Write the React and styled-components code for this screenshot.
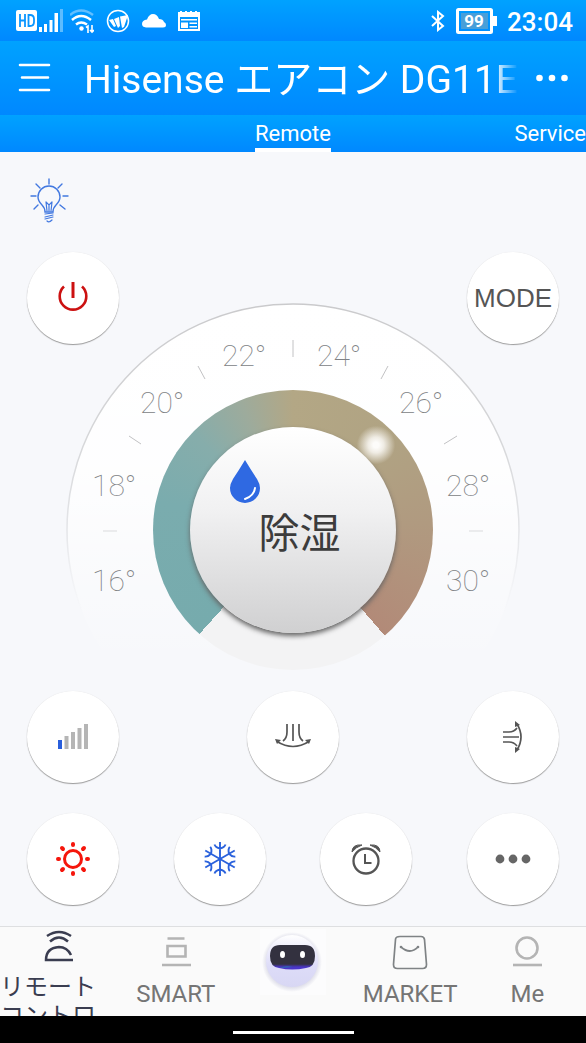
import React from "react";
import styled, { createGlobalStyle } from "styled-components";

const GlobalStyle = createGlobalStyle`
  * { box-sizing: border-box; }
  body { margin: 0; background: #f7f8fb; font-family: Roboto, "Noto Sans CJK JP", sans-serif; }
  button { font: inherit; border: 0; padding: 0; background: none; color: inherit; cursor: pointer; }
  a { color: inherit; text-decoration: none; }
  svg { display: block; flex: none; }
`;

const blue = "linear-gradient(#00a2ff, #0088ff)";

const Page = styled.div`
  min-height: 100vh;
  display: flex;
  flex-direction: column;
  overflow: hidden;
`;

const StatusBar = styled.div`
  height: 41px;
  display: flex;
  align-items: center;
  justify-content: space-between;
  padding: 0 13px 0 16px;
  background: ${blue};
  color: #fff;
`;

const StatusGroup = styled.div`
  display: flex;
  align-items: center;
  gap: ${(p) => p.$gap}px;
`;

const Clock = styled.time`
  font-size: 26px;
  line-height: 32px;
  font-weight: 500;
  padding-top: 2px;
`;

const Header = styled.header`
  height: 74px;
  display: flex;
  align-items: center;
  padding: 0 16px 0 18px;
  background: ${blue};
  color: #fff;
`;

const Title = styled.h1`
  flex: 1;
  min-width: 0;
  margin: 0 16px 0 32px;
  font-size: 39px;
  font-weight: 400;
  line-height: 48px;
  padding-top: 4px;
  white-space: nowrap;
  overflow: hidden;
  mask-image: linear-gradient(to right, #000 calc(100% - 24px), transparent);
`;

const Tabs = styled.nav`
  height: 37px;
  display: grid;
  grid-template-columns: 1fr auto 1fr;
  background: ${blue};
  color: #fff;
`;

const Tab = styled.a`
  grid-column: ${(p) => p.$column};
  justify-self: end;
  font-size: 22px;
  line-height: 33px;
  padding-top: 2px;
  border-bottom: 4px solid ${(p) => (p.$active ? "#fff" : "transparent")};
  height: 37px;
`;

const Main = styled.main`
  flex: 1;
  display: flex;
  flex-direction: column;
  padding: 24px 27px 20px;
`;

const LightButton = styled.button`
  align-self: flex-start;
  margin: 0 0 28px 3px;
`;

const ButtonRow = styled.div`
  display: flex;
  justify-content: space-between;
  margin-bottom: ${(p) => p.$below || 0}px;
`;

const RoundButton = styled.button`
  width: 92px;
  height: 92px;
  flex: none;
  display: flex;
  align-items: center;
  justify-content: center;
  border-radius: 50%;
  background: #fff;
  box-shadow: 0 1px 1px #9a9a9a, 0 0 1px #e2e2e4;
  color: #555;
  font-family: "Liberation Sans", sans-serif;
  font-size: 26px;
`;

const Dial = styled.section`
  align-self: center;
  display: grid;
  justify-items: center;
  margin: -41px 0 21px;
  > * { grid-area: 1 / 1; }
`;

const Ring = styled.div`
  width: 280px;
  height: 280px;
  margin-top: 87px;
  border-radius: 50%;
  background: conic-gradient(
    from 222deg,
    #76abad 0deg, #7aacae 60deg, #86adab 92deg, #9dab9c 116deg,
    #b3a785 138deg, #b0a383 185deg, #b09a80 225deg, #b28a78 277deg,
    #f3f3f4 277deg, #f3f3f4 360deg
  );
`;

const Knob = styled.button`
  width: 206px;
  height: 206px;
  margin-top: 124px;
  border-radius: 50%;
  display: flex;
  flex-direction: column;
  align-items: center;
  padding: 33px 0 0 13px;
  background: linear-gradient(#ffffff, #f1f1f2 40%, #d0d0d1);
  box-shadow: 0 3px 5px #666;
  color: #3c3c3c;
  font-size: 41px;
  line-height: 60px;
  position: relative;
`;

const Drop = styled.svg`
  align-self: flex-start;
  margin: 0 0 0 26px;
`;

const Glow = styled.div`
  width: 40px;
  height: 40px;
  margin: 122px 0 0 165px;
  border-radius: 50%;
  background: radial-gradient(#fdfcfa 10%, rgba(250, 248, 244, 0.85) 28%, rgba(255, 255, 255, 0) 68%);
  position: relative;
  pointer-events: none;
`;

const BottomNav = styled.nav`
  height: 90px;
  display: grid;
  grid-template-columns: repeat(5, 1fr);
  overflow: hidden;
  background: #fafafa;
  border-top: 1px solid #dedfe1;
`;

const NavItem = styled.a`
  display: flex;
  flex-direction: column;
  align-items: center;
  gap: ${(p) => (p.$active ? 2 : 9)}px;
  color: ${(p) => (p.$active ? "#3a3d50" : "#757575")};
  font-size: 24px;
  line-height: 29px;
  white-space: nowrap;
`;

const NavLabel = styled.span`
  align-self: ${(p) => (p.$start ? "flex-start" : "center")};
`;

const SystemBar = styled.div`
  height: 27px;
  display: flex;
  justify-content: center;
  align-items: center;
  background: #000;
  padding-top: 5px;
`;

const HomeHandle = styled.div`
  width: 121px;
  height: 3px;
  background: #fff;
`;

const labels = [
  ["16°", 26, 288], ["18°", 26, 193], ["20°", 74, 110], ["22°", 156, 63],
  ["24°", 251, 63], ["26°", 333, 110], ["28°", 380, 193], ["30°", 380, 288],
];

function DialFace() {
  return (
    <svg width="454" height="367" viewBox="0 0 454 367">
      <defs>
        <linearGradient id="face" x1="0" y1="0" x2="0" y2="454" gradientUnits="userSpaceOnUse">
          <stop offset="0" stopColor="#fff" />
          <stop offset="0.35" stopColor="#fff" stopOpacity="0.9" />
          <stop offset="0.6" stopColor="#fff" stopOpacity="0.35" />
          <stop offset="0.8" stopColor="#fff" stopOpacity="0" />
        </linearGradient>
        <linearGradient id="rim" x1="0" y1="0" x2="0" y2="454" gradientUnits="userSpaceOnUse">
          <stop offset="0" stopColor="#cacacc" />
          <stop offset="0.3" stopColor="#d6d7d9" />
          <stop offset="0.5" stopColor="#e4e5e8" />
          <stop offset="0.68" stopColor="#e8e9ec" stopOpacity="0" />
        </linearGradient>
      </defs>
      <circle cx="227" cy="227" r="226" fill="url(#face)" stroke="url(#rim)" strokeWidth="1.5" />
      <path d="M132 63l7 13M227 37v17M322 63l-7 13M63 133l12 8M391 133l-13 8" stroke="#c2c2c4" fill="none" />
      <path d="M37 228h14M403 228h14" stroke="#dadbdd" />
      <g fontFamily="Roboto, sans-serif" fontSize="30" fontWeight="100" fill="#808285">
        {labels.map(([t, x, y]) => <text key={t} x={x} y={y}>{t}</text>)}
      </g>
    </svg>
  );
}

function StatusIcons() {
  return (
    <>
      <StatusGroup $gap={6}>
        <svg width="48" height="26" viewBox="0 0 48 26">
          <rect x="0" y="2" width="21" height="21" rx="2" fill="#fff" />
          <path d="M4 6v13M9 6v13M4 12.500h5M12.500 7v11h1.500q4 0 4-4v-3q0-4-4-4z" fill="none" stroke="#0a96ff" strokeWidth="1.800" />
          <path d="M23 19h3v5h-3zM28 16h3v8h-3zM33.500 12h3v12h-3zM38.500 5h3.500v19h-3.500z" fill="#fff" />
          <path d="M44 1h3v23h-3z" fill="#5cbcff" />
        </svg>
        <svg width="24" height="26" viewBox="0 0 24 26" fill="none" stroke="#fff" strokeWidth="2.500">
          <path d="M0 7q11-9 23 0" stroke="#62bfff" />
          <path d="M2 12q9-8 19 0M6 16.500q5-4 11 0" />
          <circle cx="11.500" cy="20.500" r="2.200" fill="#fff" stroke="none" />
          <path d="M16 19.500l2-1.500v7M22 17v6M20 22l2 2 2-2" strokeWidth="1.600" />
        </svg>
      </StatusGroup>
      <svg width="24" height="24" viewBox="0 0 24 24">
        <circle cx="12" cy="12" r="10.500" fill="none" stroke="#fff" strokeWidth="1.500" />
        <path d="M3 11l4-1 3 7-2 1zM8 10l5-2 1 9-2 2zM14 7.500l8-1.500-4 12-2 1z" fill="#fff" />
      </svg>
      <svg width="24" height="16" viewBox="0 0 24 16">
        <path d="M4 14.500Q0 14 0 11q0-4 5-4.500Q7 1 11 1q4 0 6 5 4 0 5 3 2 1 2 3 0 2.500-3 2.500z" fill="#fff" />
      </svg>
      <svg width="22" height="22" viewBox="0 0 22 22">
        <path d="M0 2h2V1h2v1h3V1h2v1h3V1h2v1h3V1h2v1h3v19H0zM2 7v12h18V7z" fill="#fff" fillRule="evenodd" />
        <path d="M3 9H19v1.500H3zM3 12.500h7V18H3zM11.500 12.500H19V14h-7.500zM11.500 16H19v1.500h-7.500z" fill="#fff" />
      </svg>
    </>
  );
}

function BulbIcon() {
  return (
    <svg width="40" height="48" viewBox="0 -2 40 48" fill="none" stroke="#4278e0" strokeWidth="1.400" strokeLinecap="round">
      <path d="M19 1v5M1 18h5M33 18h5M6 6l4 4M32 6l-4 4M4 31l4-4M30 27l5 4" />
      <path d="M15 34q0-4-3-7-4-4-4-8a11 11 0 0 1 22 0q0 4-4 8-3 3-3 7z" />
      <path d="M16 24l1 9M22 24l-1 9M16 24l3 3 3-3M19 27v6M15 36l8-1M15 39l8-2M15 41l8-2M17 43q2 2 5-1" strokeWidth="1.200" />
    </svg>
  );
}

const PowerIcon = () => (
  <svg width="32" height="34" viewBox="0 0 32 34" fill="none" stroke="#cc1111" strokeWidth="2.600">
    <path d="M16 1v16" strokeWidth="3" />
    <path d="M7 5.500a13.300 13.300 0 1 0 18 0" />
  </svg>
);

const FanIcon = () => (
  <svg width="32" height="28" viewBox="0 0 32 28" fill="#b5b5b5">
    <path d="M1 17h4v9H1z" fill="#2a5fdc" />
    <path d="M7.500 13h4v13h-4zM14 9h4v17h-4zM20.500 5h4v21h-4zM27 1h4v25h-4z" />
  </svg>
);

const SwingHorizontalIcon = () => (
  <svg width="38" height="30" viewBox="0 0 38 30" fill="none" stroke="#555" strokeWidth="1.700">
    <path d="M13 2v8q0 6-4 9M19 2v17M25 2v8q0 6 4 9M3 19.500q16 10 32 0" />
    <path d="M1 17l6 1-4 4zM37 17l-6 1 4 4z" fill="#555" stroke="none" />
  </svg>
);

const SwingVerticalIcon = () => (
  <svg width="22" height="34" viewBox="0 0 22 34" fill="none" stroke="#555" strokeWidth="1.700">
    <path d="M1 12h6q5 0 8-4M1 17h16M1 22h6q5 0 8 4M15 4q8 13 0 26" />
    <path d="M13 1l5 4-5 2zM13 33l5-4-5-2z" fill="#555" stroke="none" />
  </svg>
);

const SunIcon = () => (
  <svg width="36" height="36" viewBox="0 0 36 36" fill="none" stroke="#f5160c">
    <circle cx="18" cy="18" r="8.500" strokeWidth="3" />
    <path d="M18 3v1M18 32v1M3 18h1M32 18h1M7 7l1 1M28 28l1 1M29 7l-1 1M8 28l-1 1" strokeWidth="4" strokeLinecap="round" />
  </svg>
);

const SnowIcon = () => (
  <svg width="36" height="36" viewBox="0 0 36 36" fill="none" stroke="#2b62dc" strokeWidth="1.900">
    {[0, 60, 120, 180, 240, 300].map((a) => (
      <path key={a} transform={`rotate(${a} 18 18)`} d="M18 18V1M12.500 3.500q1 3 5.500 4 4.500-1 5.500-4" />
    ))}
  </svg>
);

const AlarmIcon = () => (
  <svg width="32" height="34" viewBox="0 0 32 34" fill="none" stroke="#555" strokeWidth="2.300">
    <circle cx="16" cy="19" r="12.500" />
    <path d="M15 12v9h6.500" strokeWidth="2" />
    <path d="M2 10Q2 2 12 3 6 5 2 10zM30 10Q30 2 20 3q6 2 10 7z" fill="#555" stroke="#555" strokeWidth="1" />
  </svg>
);

const MoreIcon = ({ size, r, step, color }) => (
  <svg width={size} height="12" viewBox={`0 0 ${size} 12`} fill={color}>
    {[-1, 0, 1].map((i) => <circle key={i} cx={size / 2 + i * step} cy="6" r={r} />)}
  </svg>
);

const RemoteIcon = () => (
  <svg width="44" height="44" viewBox="0 0 44 44" fill="none" stroke="#3a3d50" strokeWidth="2.500">
    <path d="M36 33H9q0-12 13-13 8 0 12 8M13 14.500q9-8 18 0M10 9q12-8 24 0" />
  </svg>
);

const SmartIcon = () => (
  <svg width="44" height="44" viewBox="0 0 44 44" fill="none" stroke="#b4b4b4" strokeWidth="2.600">
    <path d="M13.500 11.500h17M8 38h29M13.500 19h18v10.500h-18z" />
  </svg>
);

const RobotIcon = () => (
  <svg width="66" height="68" viewBox="0 0 66 68">
    <defs>
      <linearGradient id="body" x1="0" y1="0" x2="0" y2="1">
        <stop offset="0" stopColor="#fff" />
        <stop offset="0.25" stopColor="#efeefc" />
        <stop offset="0.6" stopColor="#dddcf8" />
        <stop offset="1" stopColor="#d8d7f4" />
      </linearGradient>
      <linearGradient id="visor" x1="0" y1="0" x2="0" y2="1">
        <stop offset="0.78" stopColor="#33313f" />
        <stop offset="0.9" stopColor="#4a35c8" />
      </linearGradient>
      <radialGradient id="halo">
        <stop offset="0.82" stopColor="#dcdce8" />
        <stop offset="1" stopColor="#fcfcfd" />
      </radialGradient>
    </defs>
    <rect y="2" width="66" height="66" fill="#fcfcfd" />
    <circle cx="32" cy="35" r="30" fill="url(#halo)" />
    <circle cx="32" cy="34" r="26" fill="url(#body)" />
    <path d="M20 18h25q10 0 10 11 0 11-9 12-14 3-27 0-9-1-9-12 0-11 10-11z" fill="url(#visor)" />
    <path d="M20 41q5-3 13-1z" fill="#2b6fb0" />
    <ellipse cx="22.500" cy="27.500" rx="2.500" ry="3.500" fill="#fff" />
    <ellipse cx="42.500" cy="27.500" rx="2.500" ry="3.500" fill="#fff" />
  </svg>
);

const MarketIcon = () => (
  <svg width="44" height="44" viewBox="0 0 44 44" fill="none" stroke="#7f8385" strokeWidth="1.700">
    <path d="M12 9.500h21q3 0 3.500 3l2 25q0 4-4 4h-25q-4 0-4-4l2-25q0-3 4.500-3z" />
    <path d="M13 20q9 8 17 0" />
    <circle cx="13" cy="20" r="1.300" fill="#7f8385" stroke="none" />
    <circle cx="30" cy="20" r="1.300" fill="#7f8385" stroke="none" />
  </svg>
);

const MeIcon = () => (
  <svg width="44" height="44" viewBox="0 0 44 44" fill="none" stroke="#b4b4b4" strokeWidth="2.600">
    <circle cx="22" cy="21" r="10.500" />
    <path d="M8 38h29" />
  </svg>
);

export default function App() {
  return (
    <>
      <GlobalStyle />
      <Page>
        <StatusBar>
          <StatusGroup $gap={12}><StatusIcons /></StatusGroup>
          <StatusGroup $gap={10}>
            <svg width="14" height="22" viewBox="0 0 14 22" fill="none" stroke="#fff" strokeWidth="2">
              <path d="M1 6l11 10-5 4V2l5 4L1 16" />
            </svg>
            <svg width="42" height="28" viewBox="0 0 42 28">
              <rect x="2.500" y="2.500" width="34" height="23" rx="1" fill="none" stroke="#fff" strokeWidth="3" />
              <path d="M38 9h4v10h-4z" fill="#fff" />
              <path d="M6 6h27v16H6z" fill="#489fd9" />
              <text x="19" y="20" textAnchor="middle" fontFamily="Roboto, sans-serif" fontSize="17" fontWeight="700" fill="#fff">99</text>
            </svg>
            <Clock>23:04</Clock>
          </StatusGroup>
        </StatusBar>
        <Header>
          <button aria-label="Menu">
            <svg width="34" height="32" viewBox="0 0 34 32" stroke="#fff" strokeWidth="2.600" strokeLinecap="round">
              <path d="M2 3h29M4 15.500h26M2 28h29" />
            </svg>
          </button>
          <Title>Hisense エアコン DG11E</Title>
          <button aria-label="More options"><MoreIcon size={36} r={3.3} step={12.5} color="#fff" /></button>
        </Header>
        <Tabs>
          <Tab href="#remote" $column={2} $active>Remote</Tab>
          <Tab href="#service" $column={3}>Service</Tab>
        </Tabs>
        <Main>
          <LightButton aria-label="Light"><BulbIcon /></LightButton>
          <ButtonRow>
            <RoundButton aria-label="Power"><PowerIcon /></RoundButton>
            <RoundButton>MODE</RoundButton>
          </ButtonRow>
          <Dial>
            <DialFace />
            <Ring />
            <Knob>
              <Drop width="32" height="44" viewBox="0 0 32 44">
                <path d="M16 0Q22 10 28 19q3 5 3 9a15 15 0 0 1-30 0q0-4 3-9Q10 10 16 0z" fill="#2f69e2" />
                <path d="M26 28q-1 8-10 11" fill="none" stroke="#fff" strokeWidth="2" strokeLinecap="round" />
              </Drop>
              除湿
            </Knob>
            <Glow />
          </Dial>
          <ButtonRow $below={30}>
            <RoundButton aria-label="Fan speed"><FanIcon /></RoundButton>
            <RoundButton aria-label="Horizontal swing"><SwingHorizontalIcon /></RoundButton>
            <RoundButton aria-label="Vertical swing"><SwingVerticalIcon /></RoundButton>
          </ButtonRow>
          <ButtonRow>
            <RoundButton aria-label="Heat"><SunIcon /></RoundButton>
            <RoundButton aria-label="Cool"><SnowIcon /></RoundButton>
            <RoundButton aria-label="Timer"><AlarmIcon /></RoundButton>
            <RoundButton aria-label="More"><MoreIcon size={36} r={4.4} step={13} color="#666" /></RoundButton>
          </ButtonRow>
        </Main>
        <BottomNav>
          <NavItem href="#remote" $active>
            <RemoteIcon />
            <NavLabel $start>リモート<br />コントロ</NavLabel>
          </NavItem>
          <NavItem href="#smart"><SmartIcon /><NavLabel>SMART</NavLabel></NavItem>
          <NavItem href="#assistant" aria-label="Assistant"><RobotIcon /></NavItem>
          <NavItem href="#market"><MarketIcon /><NavLabel>MARKET</NavLabel></NavItem>
          <NavItem href="#me"><MeIcon /><NavLabel>Me</NavLabel></NavItem>
        </BottomNav>
        <SystemBar><HomeHandle /></SystemBar>
      </Page>
    </>
  );
}
